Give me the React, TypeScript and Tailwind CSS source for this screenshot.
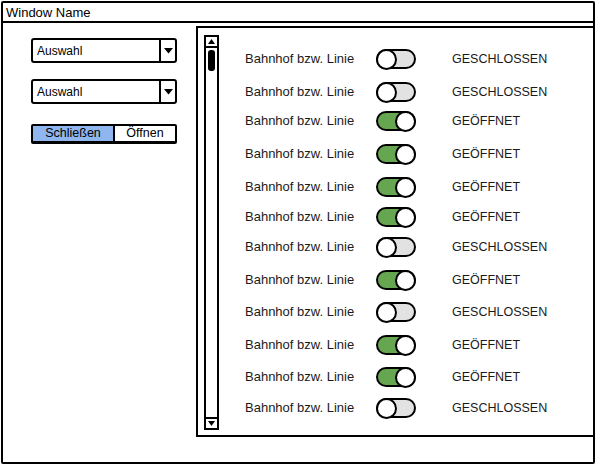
import React from "react";

const rows: { on: boolean; mt: string }[] = [
  { on: false, mt: "mt-0" },
  { on: false, mt: "mt-[13px]" },
  { on: true, mt: "mt-[9px]" },
  { on: true, mt: "mt-[13px]" },
  { on: true, mt: "mt-[13px]" },
  { on: true, mt: "mt-[10px]" },
  { on: false, mt: "mt-[10px]" },
  { on: true, mt: "mt-[13px]" },
  { on: false, mt: "mt-[12px]" },
  { on: true, mt: "mt-[13px]" },
  { on: true, mt: "mt-[12px]" },
  { on: false, mt: "mt-[11px]" },
];

function Toggle({ on }: { on: boolean }) {
  return (
    <div
      className={
        "w-[40px] h-[20px] rounded-full border-2 border-black flex items-center " +
        (on ? "bg-[#67a651] justify-end" : "bg-[#e2e2e2] justify-start")
      }
    >
      <div className="w-[21px] h-[21px] -m-[2px] rounded-full border-2 border-black bg-white shrink-0" />
    </div>
  );
}

function Dropdown({ className }: { className: string }) {
  return (
    <div
      className={
        "w-[146px] h-[25px] border-2 border-black rounded-[3px] flex items-stretch bg-white " +
        className
      }
    >
      <div className="flex-1 flex items-center pl-[4px] text-[12px] text-black">Auswahl</div>
      <div className="w-[16px] border-l-2 border-black flex items-center justify-center">
        <svg width="9" height="6" viewBox="0 0 9 6">
          <polygon points="0,0 9,0 4.5,5.5" fill="#000" />
        </svg>
      </div>
    </div>
  );
}

export default function App() {
  return (
    <div
      className="w-[596px] h-[466px] bg-white pl-px pt-px"
      style={{ fontFamily: '"Liberation Sans", Arial, sans-serif' }}
    >
      <div className="w-[594px] h-[463px] border-2 border-black rounded-[2px] flex flex-col">
        <div className="h-[20px] border-b-2 border-black flex items-center pl-[3px] text-[13px] text-black leading-none">
          Window Name
        </div>
        <div className="flex flex-1 items-start">
          <div className="w-[193px] pl-[28px] pt-[15px] flex flex-col">
            <Dropdown className="" />
            <Dropdown className="mt-[16px]" />
            <div className="mt-[20px] w-[146px] h-[20px] border-2 border-black border-b-[3px] rounded-[2px] flex text-[12.5px] text-black">
              <div className="w-[80px] bg-[#8fb6ef] flex items-center justify-center">Schließen</div>
              <div className="flex-1 border-l-2 border-black bg-white flex items-center justify-center">Öffnen</div>
            </div>
          </div>
          <div className="mt-[3px] flex-1 h-[411px] border-2 border-r-0 border-black flex">
            <div className="ml-[6px] mt-[7px] mb-[5px] w-[15px] border-2 border-black flex flex-col">
              <div className="h-[11px] border-b-2 border-black flex items-center justify-center">
                <svg width="7" height="5" viewBox="0 0 7 5">
                  <polygon points="0,5 7,5 3.5,0" fill="#000" />
                </svg>
              </div>
              <div className="mt-[2px] mx-auto w-[7px] h-[21px] rounded-[3px] bg-black" />
              <div className="flex-1" />
              <div className="h-[11px] border-t-2 border-black flex items-center justify-center">
                <svg width="7" height="5" viewBox="0 0 7 5">
                  <polygon points="0,0 7,0 3.5,5" fill="#000" />
                </svg>
              </div>
            </div>
            <div className="ml-[26px] pt-[21px] flex flex-col">
              {rows.map((r, i) => (
                <div key={i} className={"h-[20px] flex items-center " + r.mt}>
                  <div className="w-[131px] text-[13px] text-[#1a1a1a]">Bahnhof bzw. Linie</div>
                  <div className="w-[76px] flex">
                    <Toggle on={r.on} />
                  </div>
                  <div className="text-[12.5px] text-[#1a1a1a]">
                    {r.on ? "GEÖFFNET" : "GESCHLOSSEN"}
                  </div>
                </div>
              ))}
            </div>
          </div>
        </div>
      </div>
    </div>
  );
}
